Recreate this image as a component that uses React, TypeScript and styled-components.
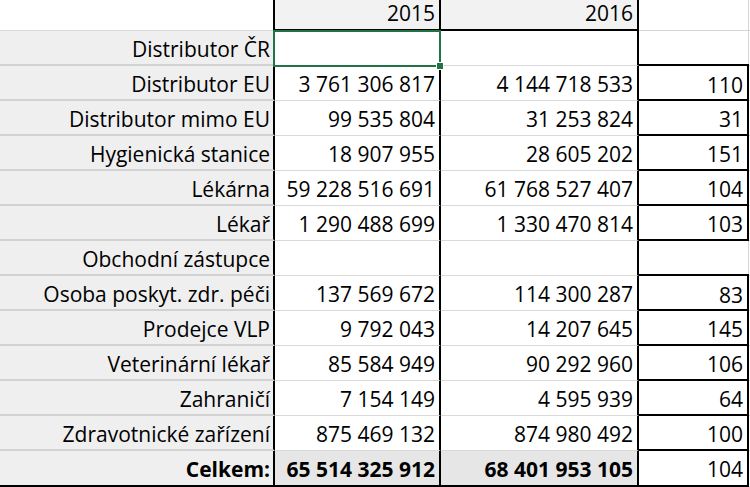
import React from "react";
import styled, { createGlobalStyle } from "styled-components";

const GlobalStyle = createGlobalStyle`
  html, body {
    margin: 0;
    padding: 0;
    background: #ffffff;
  }
  body {
    font-family: "Open Sans", "Noto Sans", sans-serif;
    color: #000;
  }
`;

const COLUMNS = "275px 166px 198px 110px 1px";

const Sheet = styled.div`
  position: relative;
  width: 750px;
  height: 487px;
  overflow: hidden;
  font-size: 21px;
`;

const Row = styled.div<{ $header?: boolean; $total?: boolean }>`
  display: grid;
  grid-template-columns: ${COLUMNS};
  height: ${(p) => (p.$header ? "31px" : p.$total ? "36px" : "35px")};
`;

const Cell = styled.div`
  box-sizing: border-box;
  text-align: right;
  white-space: nowrap;
  overflow: hidden;
`;

const LabelCell = styled(Cell)<{ $header?: boolean; $total?: boolean }>`
  background: ${(p) => (p.$header ? "#ffffff" : "#efefef")};
  border-right: 2px solid #000;
  border-bottom: ${(p) =>
    p.$total ? "2px solid #000" : p.$header ? "1px solid #d9d9d9" : "2px solid #d2d2d2"};
  padding: ${(p) => (p.$header ? "0 3px 0 0" : "2px 3px 0 0")};
  line-height: ${(p) => (p.$header ? "26px" : "32px")};
  font-weight: ${(p) => (p.$total ? 700 : 400)};
`;

const YearCell = styled(Cell)`
  background: #f2f2f2;
  border-right: 2px solid #000;
  border-bottom: 2px solid #000;
  padding-right: 4px;
  line-height: 26px;
`;

const ValueCell = styled(Cell)<{ $total?: boolean }>`
  background: ${(p) => (p.$total ? "#e6e6e6" : "#ffffff")};
  border-right: 2px solid #000;
  border-bottom: ${(p) => (p.$total ? "2px solid #000" : "1px solid #d9d9d9")};
  padding: 2px 4px 0 0;
  line-height: 33px;
  font-weight: ${(p) => (p.$total ? 700 : 400)};
`;

const RatioCell = styled(Cell)<{ $boxed?: boolean; $top?: boolean; $header?: boolean }>`
  background: #ffffff;
  border-right: ${(p) => (p.$boxed ? "2px solid #000" : "1px solid #d4d4d4")};
  border-bottom: ${(p) => (p.$boxed ? "2px solid #000" : "1px solid #d4d4d4")};
  border-top: ${(p) => (p.$top ? "2px solid #000" : "none")};
  margin-top: ${(p) => (p.$top ? "-2px" : "0")};
  padding: ${(p) => (p.$header ? "0 4px 0 0" : "2px 4px 0 0")};
  line-height: ${(p) => (p.$header ? "26px" : p.$top ? "35px" : "33px")};
`;

const Spare = styled.div`
  background: #ffffff;
  border-bottom: 1px solid #d4d4d4;
`;

const Selection = styled.div`
  position: absolute;
  left: 273px;
  top: 30px;
  width: 168px;
  height: 37px;
  box-sizing: border-box;
  border: 2px solid #217346;
  pointer-events: none;
`;

const FillHandle = styled.div`
  position: absolute;
  right: -5px;
  bottom: -5px;
  width: 6px;
  height: 6px;
  background: #217346;
  border: 1px solid #ffffff;
`;

type Line = { label: string; y2015: string; y2016: string; ratio: string };

const lines: Line[] = [
  { label: "Distributor ČR", y2015: "", y2016: "", ratio: "" },
  { label: "Distributor EU", y2015: "3 761 306 817", y2016: "4 144 718 533", ratio: "110" },
  { label: "Distributor mimo EU", y2015: "99 535 804", y2016: "31 253 824", ratio: "31" },
  { label: "Hygienická stanice", y2015: "18 907 955", y2016: "28 605 202", ratio: "151" },
  { label: "Lékárna", y2015: "59 228 516 691", y2016: "61 768 527 407", ratio: "104" },
  { label: "Lékař", y2015: "1 290 488 699", y2016: "1 330 470 814", ratio: "103" },
  { label: "Obchodní zástupce", y2015: "", y2016: "", ratio: "" },
  { label: "Osoba poskyt. zdr. péči", y2015: "137 569 672", y2016: "114 300 287", ratio: "83" },
  { label: "Prodejce VLP", y2015: "9 792 043", y2016: "14 207 645", ratio: "145" },
  { label: "Veterinární lékař", y2015: "85 584 949", y2016: "90 292 960", ratio: "106" },
  { label: "Zahraničí", y2015: "7 154 149", y2016: "4 595 939", ratio: "64" },
  { label: "Zdravotnické zařízení", y2015: "875 469 132", y2016: "874 980 492", ratio: "100" },
];

const total: Line = { label: "Celkem:", y2015: "65 514 325 912", y2016: "68 401 953 105", ratio: "104" };

export default function App() {
  return (
    <>
      <GlobalStyle />
      <Sheet>
        <Row $header>
          <LabelCell $header />
          <YearCell>2015</YearCell>
          <YearCell>2016</YearCell>
          <RatioCell $header />
          <Spare />
        </Row>
        {lines.map((line, i) => {
          const boxed = line.ratio !== "";
          const prevBoxed = i > 0 && lines[i - 1].ratio !== "";
          return (
            <Row key={line.label}>
              <LabelCell>{line.label}</LabelCell>
              <ValueCell>{line.y2015}</ValueCell>
              <ValueCell>{line.y2016}</ValueCell>
              <RatioCell $boxed={boxed} $top={boxed && !prevBoxed}>
                {line.ratio}
              </RatioCell>
              <Spare />
            </Row>
          );
        })}
        <Row $total>
          <LabelCell $total>{total.label}</LabelCell>
          <ValueCell $total>{total.y2015}</ValueCell>
          <ValueCell $total>{total.y2016}</ValueCell>
          <RatioCell $boxed>{total.ratio}</RatioCell>
          <Spare />
        </Row>
        <Selection>
          <FillHandle />
        </Selection>
      </Sheet>
    </>
  );
}
